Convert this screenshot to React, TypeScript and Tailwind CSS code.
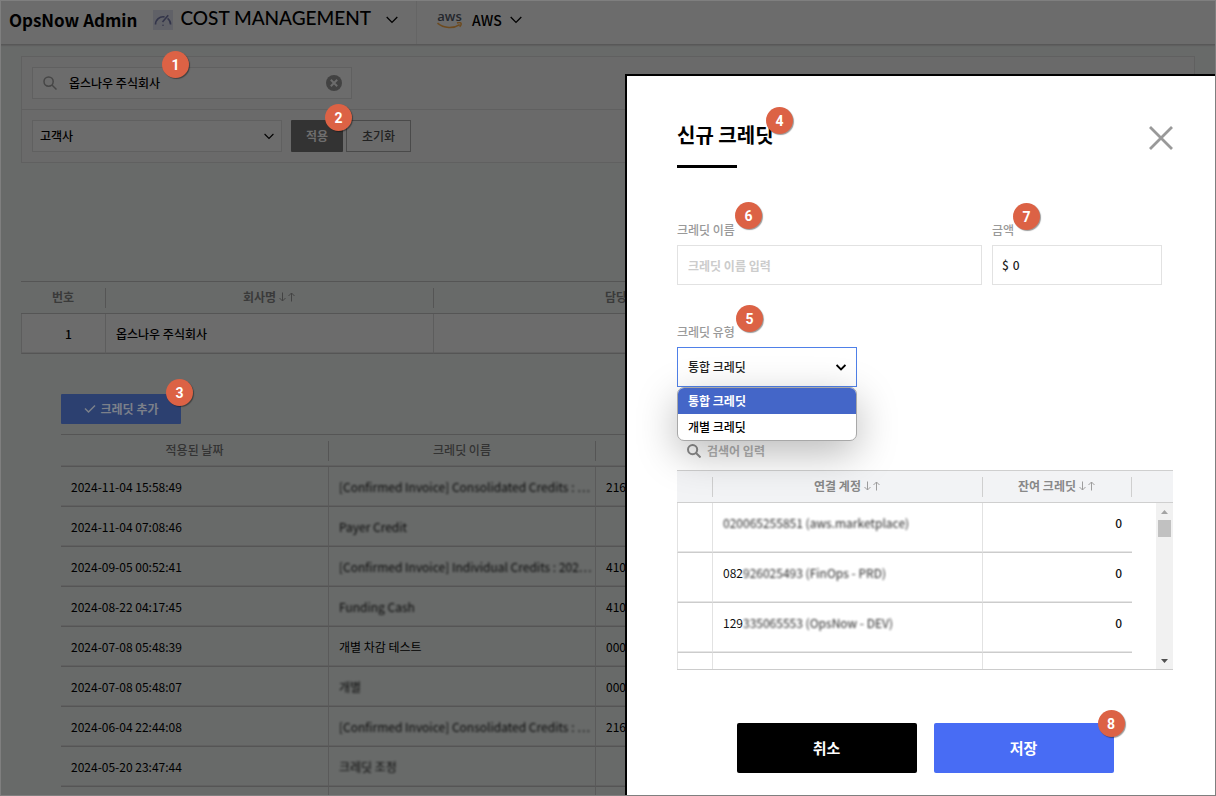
import React from 'react';

const cx = (...parts: (string | false | undefined)[]) => parts.filter(Boolean).join(' ');

function Badge({ n, className }: { n: number; className: string }) {
  return (
    <span
      className={cx(
        'absolute z-20 flex size-[27px] items-center justify-center rounded-full bg-[#dc6245] font-[Roboto,sans-serif] text-[14px] font-bold leading-none text-white shadow-[1px_1px_1px_rgba(0,0,0,0.4)]',
        className,
      )}
    >
      {n}
    </span>
  );
}

function Chevron({ className, width = 1.3 }: { className?: string; width?: number }) {
  return (
    <svg viewBox="0 0 12 8" fill="none" stroke="currentColor" strokeWidth={width} className={className} aria-hidden="true">
      <path d="M0.7 1l5.3 5.4L11.3 1" />
    </svg>
  );
}

function SearchIcon({ className, width }: { className: string; width: number }) {
  return (
    <svg viewBox="0 0 14 14" fill="none" stroke="currentColor" strokeWidth={width} className={className} aria-hidden="true">
      <circle cx="5.6" cy="5.6" r="4.6" />
      <path d="M9 9l4.500 4.500" />
    </svg>
  );
}

function SortArrows() {
  return (
    <svg viewBox="0 0 18 10" fill="none" stroke="currentColor" strokeWidth="1" className="ml-0.5 inline-block h-[10px] w-[18px] opacity-80" aria-hidden="true">
      <path d="M4.5 0.5v8.5M1.5 6l3 3 3-3M13.5 9.5V1M10.5 4l3-3 3 3" />
    </svg>
  );
}

function Hidden({ children }: { children: React.ReactNode }) {
  return <span className="opacity-90 blur-[1px]">{children}</span>;
}

const credits = [
  { date: '2024-11-04 15:58:49', name: '[Confirmed Invoice] Consolidated Credits : ⋯', hidden: true, account: '216' },
  { date: '2024-11-04 07:08:46', name: 'Payer Credit', hidden: true, account: '' },
  { date: '2024-09-05 00:52:41', name: '[Confirmed Invoice] Individual Credits : 202⋯', hidden: true, account: '410' },
  { date: '2024-08-22 04:17:45', name: 'Funding Cash', hidden: true, account: '410' },
  { date: '2024-07-08 05:48:39', name: '개별 차감 테스트', hidden: false, account: '000' },
  { date: '2024-07-08 05:48:07', name: '개별', hidden: true, account: '000' },
  { date: '2024-06-04 22:44:08', name: '[Confirmed Invoice] Consolidated Credits : ⋯', hidden: true, account: '216' },
  { date: '2024-05-20 23:47:44', name: '크레딧 조정', hidden: true, account: '' },
  { date: '', name: '', hidden: false, account: '' },
];

const accounts = [
  { shown: '', hidden: '020065255851 (aws.marketplace)' },
  { shown: '082', hidden: '926025493 (FinOps - PRD)' },
  { shown: '129', hidden: '335065553 (OpsNow - DEV)' },
  { shown: '', hidden: '' },
];

function TopBar() {
  return (
    <header className="flex h-11 items-stretch border-b border-[#585858] bg-[#6c6c6c] text-black shadow-[0_1px_1px_#5f5f5f]">
      <div className="flex items-center pb-[5px] pl-2">
        <h1 className="text-[17px] font-bold leading-6">OpsNow Admin</h1>
        <span className="ml-4 flex size-5 items-center justify-center bg-[#606167]">
          <svg viewBox="0 0 20 20" fill="none" stroke="#33354a" strokeWidth="1.6" className="size-5" aria-hidden="true">
            <path d="M2.5 14.5a7.6 7.6 0 0 1 9-7.6M14.6 8.4a7.6 7.6 0 0 1 3 6.1" />
            <path d="M9.5 12L15.2 5.3" />
            <circle cx="10" cy="15.3" r="0.8" fill="#33354a" stroke="none" />
          </svg>
        </span>
        <button type="button" className="ml-[7px] flex items-center gap-[15px]">
          <span className="pb-1 font-[Lato,sans-serif] text-[19px] leading-6">COST MANAGEMENT</span>
          <Chevron className="h-2 w-3" />
        </button>
      </div>
      <button type="button" className="ml-[18px] flex items-center border-l border-[#656565] pb-[5px] pl-5">
        <span className="flex w-[25px] flex-col items-center">
          <span className="font-['Open_Sans',sans-serif] text-[13px] font-semibold leading-[11px] text-[#24272d]">aws</span>
          <svg viewBox="0 0 25 7" fill="none" stroke="#6d4a1e" strokeWidth="1.5" className="h-[7px] w-[25px]" aria-hidden="true">
            <path d="M0.5 1.2c6.5 5.4 16 5.6 22.2 1.4M20 0.9c1.5-.3 3.4-.4 3.9.2.4.6-.2 2.600-1.200 3.700" />
          </svg>
        </span>
        <span className="ml-[10px] text-[14px] leading-6">AWS</span>
        <Chevron className="ml-2 h-2 w-3" />
      </button>
    </header>
  );
}

function Filters() {
  return (
    <section className="border border-[#606060] bg-[#6a6a6a]">
      <div className="flex border-b border-[#606060] p-[10px]">
        <div className="relative flex h-8 w-80 items-center border border-[#606060] bg-[#6c6c6c] pl-[10px] pr-[9px]">
          <SearchIcon className="size-[14px] text-[#464646]" width={1.5} />
          <input
            aria-label="검색"
            defaultValue="옵스나우 주식회사"
            className="ml-3 min-w-0 flex-1 bg-transparent text-black outline-none"
          />
          <button type="button" aria-label="지우기">
            <svg viewBox="0 0 16 16" className="size-4" aria-hidden="true">
              <circle cx="8" cy="8" r="8" fill="#424242" />
              <path d="M4.800 4.800l6.400 6.400M11.200 4.800l-6.400 6.400" stroke="#6c6c6c" strokeWidth="2" />
            </svg>
          </button>
          <Badge n={1} className="-top-[17px] left-[129px]" />
        </div>
      </div>
      <div className="flex p-[10px]">
        <div className="flex h-8 w-[250px] items-center border border-[#606060] bg-[#6c6c6c] pr-[7px]">
          <select aria-label="구분" className="flex-1 appearance-none bg-transparent pl-[7px] text-black outline-none">
            <option>고객사</option>
          </select>
          <Chevron className="pointer-events-none h-[7px] w-[10px] text-black" />
        </div>
        <div className="relative ml-[9px]">
          <button type="button" className="h-8 w-[52px] rounded-[1px] bg-[#333333] font-bold text-[#6e6e6e]">
            적용
          </button>
          <Badge n={2} className="-top-4 left-[34px]" />
        </div>
        <button type="button" className="ml-[3px] h-8 w-[65px] border border-[#4a4a4a] text-[#222222]">
          초기화
        </button>
      </div>
    </section>
  );
}

function HeadCell({ children, last, className }: { children?: React.ReactNode; last?: boolean; className?: string }) {
  return (
    <th scope="col" className={cx('p-0', className)}>
      <div className={cx('flex h-5 items-center justify-center pb-0.5', !last && 'border-r border-inherit')}>{children}</div>
    </th>
  );
}

function Companies() {
  const head = 'h-[33px] border-y border-[#555555] font-bold';
  const cell = 'h-10 border-b border-[#555555] shadow-[inset_0_-1px_0_#626262]';
  return (
    <table className="mt-[118px] w-full table-fixed border-separate border-spacing-0 text-[#3a3a3a]">
      <colgroup>
        <col className="w-[85px]" />
        <col className="w-[328px]" />
        <col className="w-[376px]" />
        <col />
      </colgroup>
      <thead>
        <tr>
          <HeadCell className={head}>번호</HeadCell>
          <HeadCell className={head}>
            회사명
            <SortArrows />
          </HeadCell>
          <HeadCell className={head}>담당자</HeadCell>
          <HeadCell last className={head} />
        </tr>
      </thead>
      <tbody className="bg-[#6c6c6c] text-black">
        <tr>
          <td className={cx(cell, 'border-x border-x-[#5d5d5d] pl-[10px] text-center')}>1</td>
          <td className={cx(cell, 'border-r border-r-[#5d5d5d] pl-[10px]')}>옵스나우 주식회사</td>
          <td className={cx(cell, 'border-r border-r-[#5d5d5d]')} />
          <td className={cell} />
        </tr>
      </tbody>
    </table>
  );
}

function Credits() {
  const head = 'h-[33px] border-y border-[#555555] font-medium shadow-[inset_0_-1px_0_#606060]';
  const cell = 'h-10 border-b border-[#555555] pl-[10px] shadow-[inset_0_-1px_0_#606060]';
  return (
    <section className="ml-10 mt-10">
      <div className="relative w-[120px]">
        <button type="button" className="flex h-[30px] w-full items-center justify-center gap-[5px] rounded-[1px] bg-[#2c4070] font-bold text-[#7c808a]">
          <svg viewBox="0 0 12 10" fill="none" stroke="currentColor" strokeWidth="1.5" className="h-[10px] w-3" aria-hidden="true">
            <path d="M1 4.500L4.500 8 11 1.500" />
          </svg>
          크레딧 추가
        </button>
        <Badge n={3} className="-top-[15px] left-[105px]" />
      </div>
      <table className="mt-[10px] w-full table-fixed border-separate border-spacing-0 text-black">
        <colgroup>
          <col className="w-[268px]" />
          <col className="w-[267px]" />
          <col />
        </colgroup>
        <thead className="text-[#333333]">
          <tr>
            <HeadCell className={head}>적용된 날짜</HeadCell>
            <HeadCell className={head}>크레딧 이름</HeadCell>
            <HeadCell last className={head} />
          </tr>
        </thead>
        <tbody className="font-normal">
          {credits.map((c, i) => (
            <tr key={i}>
              <td className={cx(cell, 'border-r border-r-[#5a5a5a]')}>{c.date}</td>
              <td className={cx(cell, 'whitespace-nowrap border-r border-r-[#5a5a5a]')}>
                {c.hidden ? <Hidden>{c.name}</Hidden> : c.name}
              </td>
              <td className={cell}>{c.account}</td>
            </tr>
          ))}
        </tbody>
      </table>
    </section>
  );
}

function AccountList() {
  const head = 'h-[33px] border-y border-[#cfcfcf]';
  const line = 'h-[50px] border-b border-[#cccccc] pt-3 align-top shadow-[inset_0_-1px_0_#e6e6e6]';
  return (
    <div className="flex h-[200px] overflow-hidden border-b border-[#cccccc]">
      <table className="h-[233px] flex-1 table-fixed border-separate border-spacing-0">
        <colgroup>
          <col className="w-9" />
          <col className="w-[270px]" />
          <col />
        </colgroup>
        <thead className="bg-[#f2f3f5] text-[#888888]">
          <tr>
            <HeadCell className={head} />
            <HeadCell className={head}>
              연결 계정
              <SortArrows />
            </HeadCell>
            <HeadCell className={head}>
              잔여 크레딧
              <SortArrows />
            </HeadCell>
          </tr>
        </thead>
        <tbody className="font-normal text-[#111111]">
          {accounts.map((a, i) => (
            <tr key={i}>
              <td className={cx(line, 'border-x border-x-[#e2e2e2]')} />
              <td className={cx(line, 'border-r border-r-[#e2e2e2] pl-[10px]')}>
                {a.shown}
                <Hidden>{a.hidden}</Hidden>
              </td>
              <td className={cx(line, 'pr-[10px] text-right font-medium')}>{i < 3 ? '0' : ''}</td>
            </tr>
          ))}
        </tbody>
      </table>
      <div className="flex w-[41px] flex-col items-end">
        <div className="h-[33px] w-full shrink-0 border-y border-[#cfcfcf] bg-[#f2f3f5]" />
        <div className="flex w-[17px] flex-1 flex-col items-center bg-[#f1f1f1]">
          <svg viewBox="0 0 17 17" className="size-[17px]" aria-hidden="true">
            <path d="M5 11l3.500-4 3.500 4z" fill="#a3a3a3" />
          </svg>
          <div className="h-[17px] w-[13px] bg-[#c1c1c1]" />
          <svg viewBox="0 0 17 17" className="mt-auto size-[17px]" aria-hidden="true">
            <path d="M5 7l3.500 4L12 7z" fill="#505050" />
          </svg>
        </div>
      </div>
    </div>
  );
}

function CreditDialog() {
  return (
    <div
      role="dialog"
      aria-labelledby="dialog-title"
      className="absolute bottom-0 right-0 top-[73px] z-10 w-[590px] border-l-2 border-t-2 border-black bg-white pl-[50px] pr-[42px] pt-[45px]"
    >
      <div className="flex items-start justify-between">
        <div className="relative">
          <h2 id="dialog-title" className="text-[20px] font-bold leading-7 text-black">
            신규 크레딧
          </h2>
          <div className="mt-4 h-[3px] w-[60px] bg-black" />
          <Badge n={4} className="-top-[14px] left-[89px]" />
        </div>
        <button type="button" aria-label="닫기" className="mt-[5px]">
          <svg viewBox="0 0 24 24" stroke="#999999" strokeWidth="2.800" className="size-6" aria-hidden="true">
            <path d="M1 1l22 22M23 1L1 23" />
          </svg>
        </button>
      </div>

      <div className="mt-[52px] flex gap-[10px] pr-[11px]">
        <div className="relative min-w-0 flex-1">
          <label htmlFor="credit-name" className="block leading-5 text-[#999999]">
            크레딧 이름
          </label>
          <input
            id="credit-name"
            placeholder="크레딧 이름 입력"
            className="mt-[5px] h-10 w-full border border-[#e2e2e2] px-[10px] outline-none placeholder:font-bold placeholder:text-[#cccccc]"
          />
          <Badge n={6} className="-top-[18px] left-[58px]" />
        </div>
        <div className="relative w-[170px]">
          <label htmlFor="amount" className="block leading-5 text-[#999999]">
            금액
          </label>
          <div className="mt-[5px] flex h-10 items-center gap-1 border border-[#e2e2e2] px-[9px] text-[#222222]">
            <span>$</span>
            <input id="amount" defaultValue="0" className="min-w-0 flex-1 outline-none" />
          </div>
          <Badge n={7} className="-top-[17px] left-[21px]" />
        </div>
      </div>

      <div className="relative mt-[37px] w-[180px]">
        <label htmlFor="credit-type" className="block leading-5 text-[#999999]">
          크레딧 유형
        </label>
        <div className="mt-[5px] flex h-10 items-center border border-[#4f80e8] pr-[10px]">
          <select id="credit-type" className="flex-1 appearance-none bg-transparent pl-[10px] text-[#222222] outline-none">
            <option>통합 크레딧</option>
            <option>개별 크레딧</option>
          </select>
          <Chevron className="pointer-events-none h-[7px] w-[10px] text-black" width={2.2} />
        </div>
        <Badge n={5} className="-top-[17px] left-[59px]" />
        <ul
          role="listbox"
          aria-label="크레딧 유형"
          className="absolute left-0 top-full z-10 w-full overflow-hidden rounded-[7px] border border-[#a8a8a8] bg-white text-black shadow-[0_12px_40px_rgba(0,0,0,0.28)]"
        >
          <li role="option" aria-selected="true" className="bg-[#4466c8] px-[10px] font-bold leading-[26px] text-white">
            통합 크레딧
          </li>
          <li role="option" aria-selected="false" className="px-[10px] leading-[26px]">
            개별 크레딧
          </li>
        </ul>
      </div>

      <div className="mb-[5px] mt-[50px] flex h-7 items-center pl-[10px]">
        <SearchIcon className="size-[14px] text-[#8c8c8c]" width={2} />
        <input
          aria-label="연결 계정 검색"
          placeholder="검색어 입력"
          className="ml-[6px] min-w-0 flex-1 bg-transparent outline-none placeholder:font-bold placeholder:text-[#b4b4b4]"
        />
      </div>

      <AccountList />

      <div className="mt-[53px] flex justify-center gap-[17px] text-[15px] font-bold text-white">
        <button type="button" className="h-[50px] w-[180px] rounded-[2px] bg-black">
          취소
        </button>
        <div className="relative">
          <button type="button" className="h-[50px] w-[180px] rounded-[2px] bg-[#486cf4]">
            저장
          </button>
          <Badge n={8} className="-top-[13px] left-[164px]" />
        </div>
      </div>
    </div>
  );
}

export default function App() {
  return (
    <div className="relative h-screen overflow-hidden border border-[#7f7f7f] bg-[#686a69] font-['Noto_Sans_CJK_KR',sans-serif] text-[12px] font-medium leading-4">
      <TopBar />
      <main className="px-5 pt-[11px]">
        <Filters />
        <Companies />
        <Credits />
      </main>
      <CreditDialog />
    </div>
  );
}
